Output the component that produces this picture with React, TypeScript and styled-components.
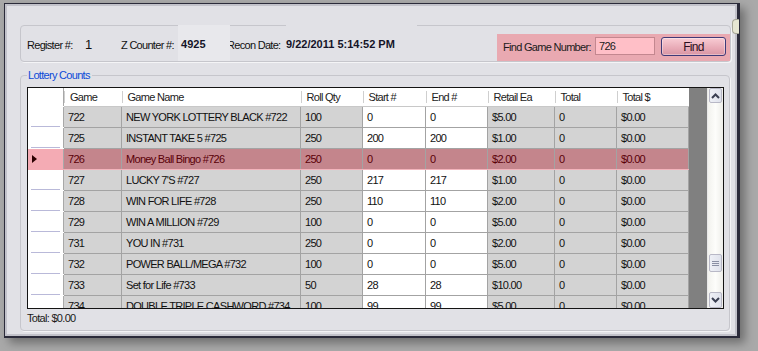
import React from "react";
import styled, { createGlobalStyle, css } from "styled-components";

const GlobalStyle = createGlobalStyle`
  html, body {
    margin: 0;
    padding: 0;
    background: #a9a9a9;
    width: 758px;
    height: 351px;
    overflow: hidden;
  }
  body {
    font-family: "Liberation Sans", Arial, sans-serif;
    font-size: 11px;
    color: #000;
  }
`;

// condensed look of the original Tahoma 8pt text
const narrowText = css`
  font-family: "Liberation Sans", Arial, sans-serif;
  font-size: 11px;
  letter-spacing: -0.7px;
`;

type Row = {
  game: string;
  name: string;
  roll: string;
  start: string;
  end: string;
  retail: string;
  total: string;
  totalDollar: string;
  selected?: boolean;
};

const rows: Row[] = [
  { game: "722", name: "NEW YORK LOTTERY BLACK #722", roll: "100", start: "0", end: "0", retail: "$5.00", total: "0", totalDollar: "$0.00" },
  { game: "725", name: "INSTANT TAKE 5 #725", roll: "250", start: "200", end: "200", retail: "$1.00", total: "0", totalDollar: "$0.00" },
  { game: "726", name: "Money Ball Bingo #726", roll: "250", start: "0", end: "0", retail: "$2.00", total: "0", totalDollar: "$0.00", selected: true },
  { game: "727", name: "LUCKY 7'S #727", roll: "250", start: "217", end: "217", retail: "$1.00", total: "0", totalDollar: "$0.00" },
  { game: "728", name: "WIN FOR LIFE #728", roll: "250", start: "110", end: "110", retail: "$2.00", total: "0", totalDollar: "$0.00" },
  { game: "729", name: "WIN A MILLION #729", roll: "100", start: "0", end: "0", retail: "$5.00", total: "0", totalDollar: "$0.00" },
  { game: "731", name: "YOU IN #731", roll: "250", start: "0", end: "0", retail: "$2.00", total: "0", totalDollar: "$0.00" },
  { game: "732", name: "POWER BALL/MEGA #732", roll: "100", start: "0", end: "0", retail: "$5.00", total: "0", totalDollar: "$0.00" },
  { game: "733", name: "Set for Life #733", roll: "50", start: "28", end: "28", retail: "$10.00", total: "0", totalDollar: "$0.00" },
  { game: "734", name: "DOUBLE TRIPLE CASHWORD #734", roll: "100", start: "99", end: "99", retail: "$5.00", total: "0", totalDollar: "$0.00" },
];

const columns = [
  { title: "Game", width: 58 },
  { title: "Game Name", width: 179 },
  { title: "Roll Qty", width: 62 },
  { title: "Start #", width: 63 },
  { title: "End #", width: 62 },
  { title: "Retail Ea", width: 67 },
  { title: "Total", width: 62 },
  { title: "Total $", width: 72 },
];

const Window = styled.div`
  position: relative;
  box-sizing: border-box;
  margin: 3px 0 0 4px;
  width: 736px;
  height: 335px;
  border: 1px solid #2b2b3a;
  border-right-width: 3px;
  border-bottom-width: 2px;
  background: #e1e1e6;
  box-shadow: inset 0 0 0 2px #c2c2ca, 5px 5px 9px rgba(0, 0, 0, 0.35);
  padding: 21px 6px 0 15px;
`;

const CornerGrip = styled.div`
  position: absolute;
  top: 15px;
  right: -2px;
  width: 6px;
  height: 13px;
  background: #e6e6d2;
  border: 1px solid #a8a898;
  border-right: none;
  border-radius: 4px 0 0 4px;
`;

const InfoBox = styled.div`
  box-sizing: border-box;
  display: flex;
  height: 37px;
  width: 711px;
  border: 1px solid #c6c6cc;
  border-radius: 4px;
  box-shadow: 1px 1px 0 #f4f4f6;
`;

const InfoLabel = styled.div<{ $w: number; $pad?: number; $pull?: number }>`
  ${narrowText};
  box-sizing: border-box;
  width: ${({ $w }) => $w}px;
  flex: none;
  padding: 13px 0 0 ${({ $pad }) => $pad ?? 0}px;
  margin-left: ${({ $pull }) => ($pull ? -$pull : 0)}px;
  color: #111;
  white-space: nowrap;
`;

const InfoValue = styled.div<{ $w: number; $bg?: string; $bold?: boolean }>`
  position: relative;
  z-index: 1;
  width: ${({ $w }) => $w}px;
  flex: none;
  margin-top: -1px;
  height: 36px;
  box-sizing: border-box;
  background: ${({ $bg }) => $bg ?? "transparent"};
  white-space: nowrap;
  ${({ $bold }) =>
    $bold
      ? css`
          padding-top: 13px;
          font-family: "Liberation Sans", Arial, sans-serif;
          font-weight: bold;
          font-size: 11px;
          color: #141428;
        `
      : css`
          ${narrowText};
          font-size: 13px;
          padding-top: 12px;
          color: #111;
        `};
`;

const FindPanel = styled.div`
  margin-left: auto;
  align-self: flex-end;
  display: flex;
  align-items: flex-start;
  box-sizing: border-box;
  width: 233px;
  height: 27px;
  padding: 3px 0 0 6px;
  background: #e9a9b1;
`;

const FindLabel = styled.span`
  ${narrowText};
  width: 92px;
  padding-top: 4px;
  color: #1a1a1a;
  white-space: nowrap;
`;

const FindInput = styled.div`
  ${narrowText};
  box-sizing: border-box;
  width: 60px;
  height: 18px;
  padding: 2px 0 0 3px;
  background: #ffbfc7;
  border: 1px solid #c3878f;
  color: #1a1a1a;
`;

const FindButton = styled.button`
  ${narrowText};
  font-size: 12px;
  box-sizing: border-box;
  margin-left: 6px;
  width: 65px;
  height: 19px;
  padding: 0;
  border: 1px solid #3f3a78;
  border-radius: 3px;
  background: linear-gradient(#f8ccd4, #e8aab6 60%, #d995a4);
  box-shadow: inset 0 0 0 1px rgba(255, 255, 255, 0.35);
  color: #2b1020;
`;

const CountsBox = styled.fieldset`
  box-sizing: border-box;
  margin: 6px 0 0;
  width: 710px;
  height: 263px;
  padding: 5px 4px 0 6px;
  border: 1px solid #c6c6cc;
  border-radius: 4px;
  box-shadow: 1px 1px 0 #f4f4f6;
  min-width: 0;
`;

const Legend = styled.legend`
  ${narrowText};
  margin-left: 0;
  padding: 0 2px 0 1px;
  line-height: 14px;
  color: #0b4ad8;
`;

const Grid = styled.div`
  display: flex;
  box-sizing: border-box;
  width: 697px;
  height: 222px;
  border: 1px solid #141414;
  background: #808080;
  overflow: hidden;
`;

const TableArea = styled.div`
  flex: 1;
  overflow: hidden;
`;

const Table = styled.table`
  ${narrowText};
  border-collapse: collapse;
  table-layout: fixed;
  width: 660px;
`;

const HeadCell = styled.th<{ $w: number }>`
  position: relative;
  width: ${({ $w }) => $w}px;
  height: 18px;
  padding: 0 0 0 6px;
  box-sizing: border-box;
  background: #fff;
  border-bottom: 1px solid #c8c8c8;
  text-align: left;
  font-weight: normal;
  color: #222;
  white-space: nowrap;
  overflow: hidden;

  &::before {
    content: "";
    position: absolute;
    left: 0;
    top: 3px;
    bottom: 3px;
    width: 1px;
    background: #cfcfcf;
  }
`;

const CornerCell = styled.th`
  width: 35px;
  height: 18px;
  padding: 0;
  background: #fff;
  border-right: 1px solid #a8a8a8;
  border-bottom: 1px solid #fff;
`;

const RowHead = styled.td<{ $selected?: boolean }>`
  height: 21px;
  padding: 0 0 0 4px;
  box-sizing: border-box;
  border-right: 1px solid #a8a8a8;
  border-bottom: 1px solid ${({ $selected }) => ($selected ? "#f4abb4" : "#fff")};
  background: ${({ $selected }) =>
    $selected
      ? "#f4abb4"
      : "linear-gradient(#b9b9d9, #b9b9d9) no-repeat 50% 100% / 29px 1px, #fff"};
  line-height: 0;
`;

const Cell = styled.td<{ $editable?: boolean; $selected?: boolean }>`
  height: 21px;
  padding: 0 0 0 4px;
  box-sizing: border-box;
  border-right: 1px solid #a3a3a3;
  border-bottom: 1px solid ${({ $selected }) => ($selected ? "#f3b4bc" : "#a3a3a3")};
  background: ${({ $editable, $selected }) =>
    $selected ? "#c4858c" : $editable ? "#ffffff" : "#d3d3d3"};
  color: ${({ $selected }) => ($selected ? "#5a0008" : "#111")};
  white-space: nowrap;
  overflow: hidden;
`;

const Scrollbar = styled.div`
  flex: none;
  width: 15px;
  display: flex;
  flex-direction: column;
  background: linear-gradient(90deg, #f2f2ee, #fdfdfb 50%, #eeeeea);
  border-left: 1px solid #e8e8e8;
`;

const ScrollButton = styled.div<{ $top?: number; $h?: number }>`
  box-sizing: border-box;
  margin: ${({ $top }) => $top ?? 0}px 1px 0 1px;
  height: ${({ $h }) => $h ?? 15}px;
  border: 1px solid #b8b8c6;
  border-radius: 2px;
  background: linear-gradient(90deg, #eef0f6, #dfe2ec);
  display: flex;
  align-items: center;
  justify-content: center;
`;

const Total = styled.div`
  ${narrowText};
  margin-top: 2px;
  line-height: 14px;
  color: #1a1a1a;
`;

function Chevron({ up }: { up?: boolean }) {
  return (
    <svg width="9" height="6" viewBox="0 0 9 6">
      <path
        d={up ? "M1 5 L4.5 1.5 L8 5" : "M1 1 L4.5 4.5 L8 1"}
        fill="none"
        stroke="#3a3f52"
        strokeWidth="2"
      />
    </svg>
  );
}

function Grip() {
  return (
    <svg width="7" height="7" viewBox="0 0 7 7">
      <path d="M0 1.5H7M0 3.5H7M0 5.5H7" stroke="#8a8fa4" strokeWidth="1" />
    </svg>
  );
}

function RowMarker() {
  return (
    <svg width="5" height="8" viewBox="0 0 5 8">
      <path d="M0 0 L5 4 L0 8 Z" fill="#2a0000" />
    </svg>
  );
}

export default function App() {
  return (
    <>
      <GlobalStyle />
      <Window>
        <CornerGrip />
        <InfoBox>
          <InfoLabel $w={64} $pad={6}>
            Register #:
          </InfoLabel>
          <InfoValue $w={36}>1</InfoValue>
          <InfoLabel $w={57}>Z Counter #:</InfoLabel>
          <InfoValue $w={52} $bg="#e8e8ec" $bold>
            &nbsp;4925
          </InfoValue>
          <InfoLabel $w={59} $pull={3}>
            Recon Date:
          </InfoLabel>
          <InfoValue $w={131} $bg="#e1e1e6" $bold>
            9/22/2011 5:14:52 PM
          </InfoValue>
          <FindPanel>
            <FindLabel>Find Game Number:</FindLabel>
            <FindInput>726</FindInput>
            <FindButton>Find</FindButton>
          </FindPanel>
        </InfoBox>

        <CountsBox>
          <Legend>Lottery Counts</Legend>
          <Grid>
            <TableArea>
              <Table>
                <thead>
                  <tr>
                    <CornerCell />
                    {columns.map((c) => (
                      <HeadCell key={c.title} $w={c.width}>
                        {c.title}
                      </HeadCell>
                    ))}
                  </tr>
                </thead>
                <tbody>
                  {rows.map((r) => (
                    <tr key={r.game}>
                      <RowHead $selected={r.selected}>
                        {r.selected && <RowMarker />}
                      </RowHead>
                      <Cell $selected={r.selected}>{r.game}</Cell>
                      <Cell $selected={r.selected}>{r.name}</Cell>
                      <Cell $selected={r.selected}>{r.roll}</Cell>
                      <Cell $selected={r.selected} $editable>
                        {r.start}
                      </Cell>
                      <Cell $selected={r.selected} $editable>
                        {r.end}
                      </Cell>
                      <Cell $selected={r.selected}>{r.retail}</Cell>
                      <Cell $selected={r.selected}>{r.total}</Cell>
                      <Cell $selected={r.selected}>{r.totalDollar}</Cell>
                    </tr>
                  ))}
                </tbody>
              </Table>
            </TableArea>
            <Scrollbar>
              <ScrollButton>
                <Chevron up />
              </ScrollButton>
              <ScrollButton $top={151} $h={18}>
                <Grip />
              </ScrollButton>
              <ScrollButton $top={20} $h={16}>
                <Chevron />
              </ScrollButton>
            </Scrollbar>
          </Grid>
          <Total>Total: $0.00</Total>
        </CountsBox>
      </Window>
    </>
  );
}
